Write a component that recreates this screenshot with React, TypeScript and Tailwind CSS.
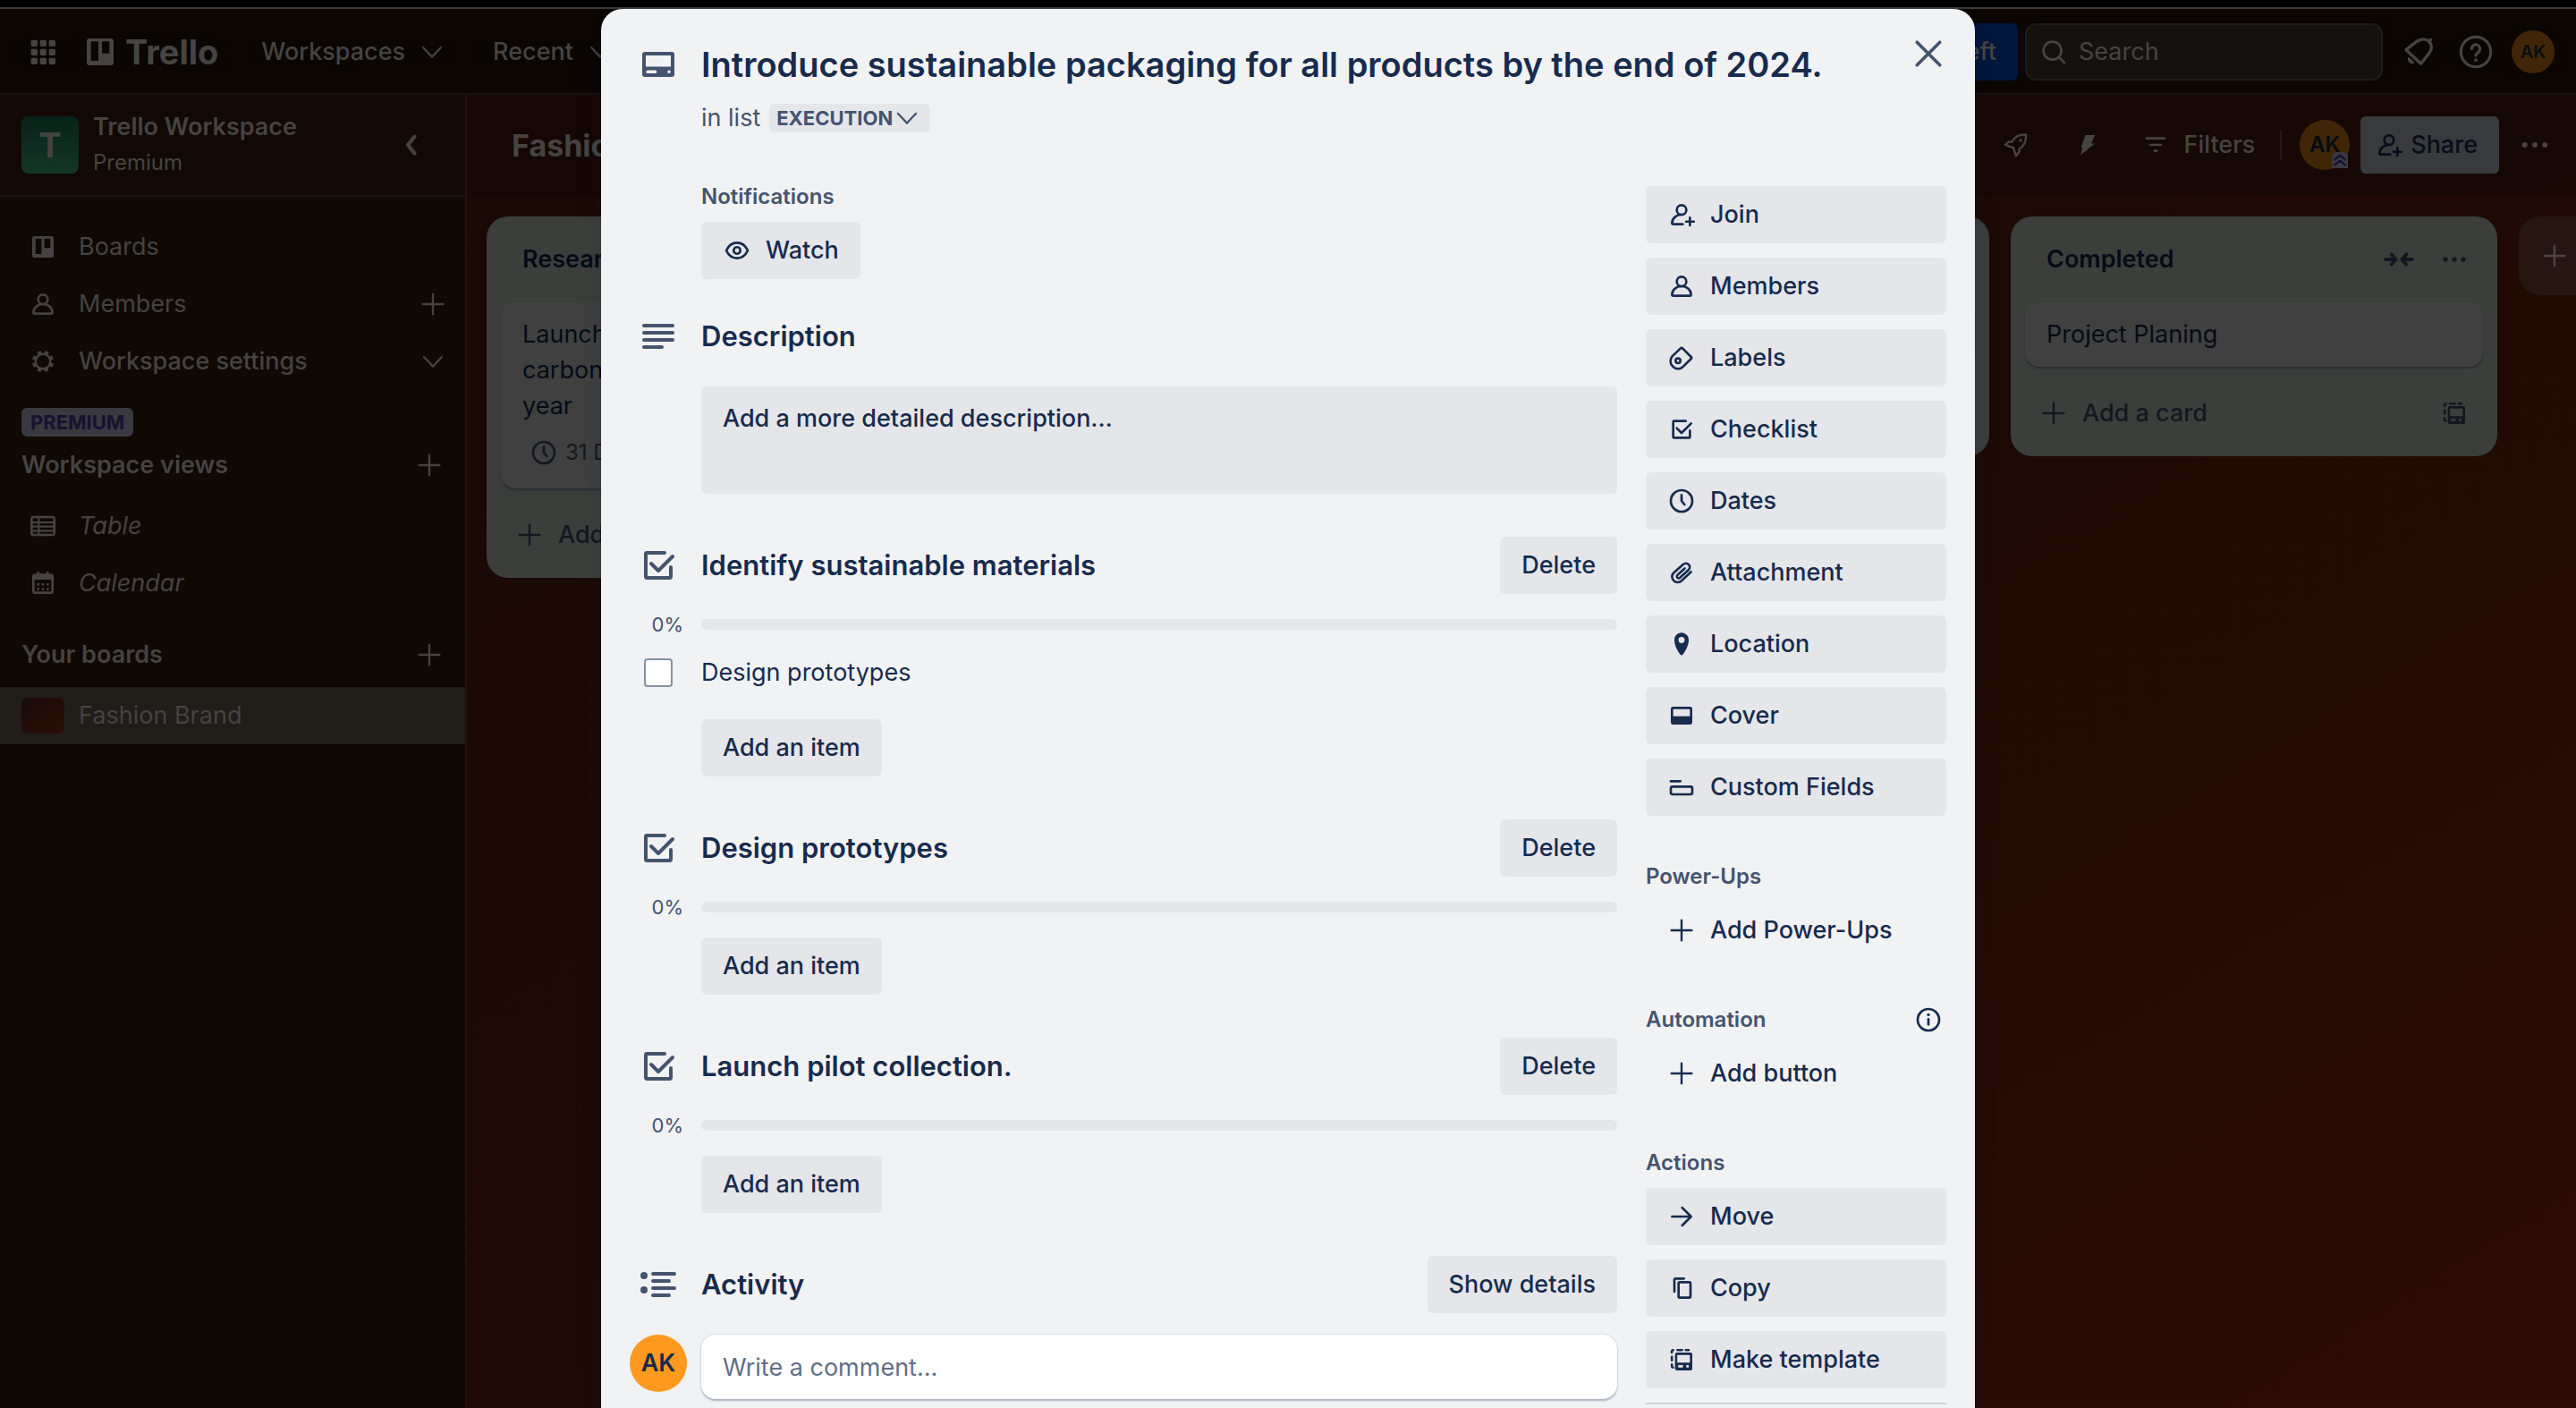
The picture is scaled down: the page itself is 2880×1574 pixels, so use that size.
import { useState, type ReactNode } from "react";

type IconProps = { className?: string };

/* Stroke icons share a 24-unit box; each draws one glyph of the interface. */
function Glyph({ className = "size-8", w = 2, children }: IconProps & { w?: number; children: ReactNode }) {
  return (
    <svg
      viewBox="0 0 24 24"
      className={`shrink-0 ${className}`}
      fill="none"
      stroke="currentColor"
      strokeWidth={w}
      strokeLinecap="round"
      strokeLinejoin="round"
      aria-hidden="true"
    >
      {children}
    </svg>
  );
}

const Plus = (p: IconProps) => (
  <Glyph {...p} w={1.8}>
    <path d="M12 3.5v17M3.5 12h17" />
  </Glyph>
);
const ChevronDown = (p: IconProps) => (
  <Glyph {...p} w={1.7}>
    <path d="M4.5 8.200l7.500 8 7.500-8" />
  </Glyph>
);
const AppGrid = (p: IconProps) => (
  <Glyph {...p}>
    <g fill="currentColor" stroke="none">
      {[4, 10, 16].map((y) => [4, 10, 16].map((x) => <rect key={`${x}-${y}`} x={x} y={y} width="4.400" height="4.400" rx="1" />))}
    </g>
  </Glyph>
);
const BoardMark = (p: IconProps) => (
  <Glyph {...p}>
    <path
      fill="currentColor"
      stroke="none"
      fillRule="evenodd"
      d="M5 3h14a2 2 0 0 1 2 2v14a2 2 0 0 1-2 2H5a2 2 0 0 1-2-2V5a2 2 0 0 1 2-2zm.8 2.600v11.800a.6.6 0 0 0 .6.6h3.800a.6.6 0 0 0 .6-.6V5.600a.6.6 0 0 0-.6-.6H6.400a.6.6 0 0 0-.6.6zm7.400 0v6.800a.6.6 0 0 0 .6.6h3.800a.6.6 0 0 0 .6-.6V5.600a.6.6 0 0 0-.6-.6h-3.800a.6.6 0 0 0-.6.6z"
    />
  </Glyph>
);
const Person = (p: IconProps) => (
  <Glyph {...p}>
    <circle cx="12" cy="8" r="4" />
    <path d="M4 19.200c0-4 3.500-7.200 8-7.200s8 3.200 8 7.200c0 .5-.4.800-.8.800H4.800c-.4 0-.8-.3-.8-.8z" />
  </Glyph>
);
const PersonAdd = (p: IconProps) => (
  <Glyph {...p}>
    <circle cx="12" cy="8" r="4" />
    <path d="M12 12c-4.500 0-8 3.200-8 7.200 0 .5.4.800.8.800H13M19 14.500v6.500M15.800 17.800h6.500" />
  </Glyph>
);
const Gear = (p: IconProps) => (
  <Glyph {...p} w={1.8}>
    <circle cx="12" cy="12" r="6.200" />
    <g strokeWidth="3.200" strokeLinecap="butt">
      {[0, 45, 90, 135, 180, 225, 270, 315].map((a) => (
        <path key={a} d="M12 5.800V3" transform={`rotate(${a + 22.5} 12 12)`} />
      ))}
    </g>
  </Glyph>
);
const TableIcon = (p: IconProps) => (
  <Glyph {...p}>
    <rect x="2.500" y="4.500" width="19" height="15" rx="1.500" />
    <path d="M3 9h18M3 12.500h18M3 16h18M8.500 4.500v15" strokeWidth="1.600" />
  </Glyph>
);
const CalendarIcon = (p: IconProps) => (
  <Glyph {...p}>
    <rect x="4" y="5" width="16" height="15" rx="1.500" />
    <path d="M4 7h16" strokeWidth="4" strokeLinecap="butt" />
    <path d="M8 3v3M16 3v3" />
    <path d="M8 13h.01M12 13h.01M16 13h.01M8 16.800h.01M12 16.800h.01M16 16.800h.01" strokeWidth="1.900" strokeLinecap="square" />
  </Glyph>
);
const Bell = (p: IconProps) => (
  <Glyph {...p} w={2}>
    <path d="M3.600 10.600 10.500 5.200c3-2.300 6.500-2.200 8.600-.2 1.900 1.900 1.900 4.800.2 7.600L13.600 20z" />
    <path d="M19.200 4.800l1-1" />
    <path d="M5.400 16.200c-.2 1.800.9 3.200 2.900 3.100z" fill="currentColor" strokeWidth="1.400" />
  </Glyph>
);
const Help = (p: IconProps) => (
  <Glyph {...p} w={1.9}>
    <circle cx="12" cy="12" r="10" />
    <path d="M9.200 10a2.800 2.800 0 1 1 4.600 2.100c-1 .8-1.800 1.200-1.800 2.400" />
    <path d="M12 17.500h.01" strokeWidth="2.300" />
  </Glyph>
);
const SearchIcon = (p: IconProps) => (
  <Glyph {...p}>
    <circle cx="11" cy="11" r="7.500" />
    <path d="M16.500 16.500l4.500 4.500" />
  </Glyph>
);
const Rocket = (p: IconProps) => (
  <Glyph {...p} w={1.8}>
    <path d="M8.500 9.500c2-3.800 6-6.500 11.800-6 .4 5.500-2 9.800-5.800 12l.3 2-2.800 3.700-1.500-4.200-.6-2.700-2.900-.8-4-1.800 2.800-2.200z" />
    <path d="M15.800 8.200h.01" strokeWidth="2.600" />
  </Glyph>
);
const Bolt = (p: IconProps) => (
  <Glyph {...p}>
    <path fill="currentColor" stroke="none" d="M10 3.800h8.200l-3.200 7h3L6.200 20.500l1.400-6.500h-1z" />
  </Glyph>
);
const FilterIcon = (p: IconProps) => (
  <Glyph {...p}>
    <path d="M4.500 6.500h15M7.500 12h9M11 17h2" />
  </Glyph>
);
const Dots = (p: IconProps) => (
  <Glyph {...p}>
    <g fill="currentColor" stroke="none">
      <circle cx="4.500" cy="12" r="2" />
      <circle cx="12" cy="12" r="2" />
      <circle cx="19.500" cy="12" r="2" />
    </g>
  </Glyph>
);
const Collapse = (p: IconProps) => (
  <Glyph {...p} w={2.7}>
    <path d="M2 12h7M6.500 8.300l3.200 3.700-3.200 3.700M22 12h-7M17.500 8.300L14.300 12l3.200 3.700" />
  </Glyph>
);
const TemplateIcon = (p: IconProps) => (
  <Glyph {...p}>
    <path d="M3.800 6V5.200c0-.8.500-1.200 1.200-1.200M8.500 3.900h4M15.500 3.900H18M3.900 9.500v3M3.900 16v1.500c0 .7.400 1 1 1" strokeWidth="1.900" />
    <path
      fill="currentColor"
      stroke="none"
      fillRule="evenodd"
      d="M8 6h11.500A1.500 1.500 0 0 1 21 7.500v12a1.500 1.500 0 0 1-1.500 1.500H8a1.500 1.500 0 0 1-1.500-1.500v-12A1.500 1.500 0 0 1 8 6zm.4 2v6.400H19V8zm.8 8.500v2h4v-2zm6.800 0v2h2v-2z"
    />
  </Glyph>
);
const Clock = (p: IconProps) => (
  <Glyph {...p}>
    <circle cx="12" cy="12" r="9" />
    <path d="M12 7v5l2.500 3" />
  </Glyph>
);
const CardIcon = (p: IconProps) => (
  <Glyph {...p}>
    <path
      fill="currentColor"
      stroke="none"
      fillRule="evenodd"
      d="M4.500 5h15A1.500 1.500 0 0 1 21 6.500v11a1.500 1.500 0 0 1-1.500 1.500h-15A1.500 1.500 0 0 1 3 17.500v-11A1.500 1.500 0 0 1 4.500 5zM5 7v6.200h14V7zm1 8.200a.8.8 0 0 0 0 1.800h4.300a.8.8 0 0 0 0-1.800zm12 0a.9.9 0 1 0 0 1.800.9.9 0 0 0 0-1.800z"
    />
  </Glyph>
);
const TextLines = (p: IconProps) => (
  <Glyph {...p}>
    <path d="M4 6h16M4 10h16M4 14h16M4 18h10" />
  </Glyph>
);
const CheckSquare = (p: IconProps) => (
  <Glyph {...p}>
    <path d="M15.500 5H5.700A.7.7 0 0 0 5 5.700v12.600a.7.7 0 0 0 .7.700h12.600a.7.7 0 0 0 .7-.7V13" />
    <path d="M8 11l4 4 8-8" />
  </Glyph>
);
const ActivityIcon = (p: IconProps) => (
  <Glyph {...p}>
    <circle cx="4" cy="7" r="2" fill="currentColor" stroke="none" />
    <circle cx="4" cy="15" r="2" fill="currentColor" stroke="none" />
    <path d="M9 6h12M9 10h9M9 14h12M9 18h9" />
  </Glyph>
);
const Eye = (p: IconProps) => (
  <Glyph {...p}>
    <path d="M3 12c2-4.300 5.300-6.500 9-6.500s7 2.200 9 6.500c-2 4.300-5.300 6.500-9 6.500S5 16.300 3 12z" />
    <circle cx="12" cy="12" r="2.800" />
  </Glyph>
);
const LabelIcon = (p: IconProps) => (
  <Glyph {...p}>
    <path d="M4.300 10.600 11 4.200c.6-.6 1.400-.6 2 0l7 7c.5.500.5 1.100 0 1.600l-6.500 6.400a5.900 5.900 0 0 1-8.800 0 6 6 0 0 1-.4-8.600z" />
    <circle cx="9" cy="14.500" r="2" />
  </Glyph>
);
const ClipIcon = (p: IconProps) => (
  <Glyph {...p}>
    <path d="M20 11.500l-7.800 7.300c-2 1.900-5 1.900-6.800 0-1.900-1.900-1.800-4.800.1-6.600l7.800-7c1.400-1.200 3.500-1.200 4.700.1 1.200 1.300 1.200 3.200-.1 4.500l-7.200 6.500c-.7.600-1.600.600-2.200 0-.6-.7-.6-1.600.1-2.200l6-5.500" />
  </Glyph>
);
const Pin = (p: IconProps) => (
  <Glyph {...p}>
    <path
      fill="currentColor"
      stroke="none"
      fillRule="evenodd"
      d="M12 2.500c3.500 0 6 2.700 6 6.200 0 3.800-2.300 9-5 12.100-.6.700-1.400.700-2 0-2.700-3.100-5-8.300-5-12.100 0-3.500 2.500-6.200 6-6.200zM12 6a2.600 2.600 0 1 0 0 5.200A2.600 2.600 0 0 0 12 6z"
    />
  </Glyph>
);
const CoverIcon = (p: IconProps) => (
  <Glyph {...p}>
    <rect x="4" y="5.500" width="16" height="13" rx="1" />
    <path d="M4 15.500h16" strokeWidth="6" strokeLinecap="butt" />
  </Glyph>
);
const FieldsIcon = (p: IconProps) => (
  <Glyph {...p}>
    <path d="M3 7h8" />
    <rect x="3" y="11.500" width="18" height="6.500" rx="1.500" />
  </Glyph>
);
const InfoIcon = (p: IconProps) => (
  <Glyph {...p}>
    <circle cx="12" cy="12" r="9" />
    <path d="M12 11.500v4.500" />
    <path d="M12 7.800h.01" strokeWidth="2.500" />
  </Glyph>
);
const ArrowRight = (p: IconProps) => (
  <Glyph {...p} w={1.9}>
    <path d="M4 12h16M12.500 4.500L20 12l-7.500 7.500" />
  </Glyph>
);
const CopyIcon = (p: IconProps) => (
  <Glyph {...p}>
    <rect x="9.500" y="7" width="10" height="13" rx="1" />
    <path d="M6 15V5a1 1 0 0 1 1-1h7" />
  </Glyph>
);
const CloseIcon = (p: IconProps) => (
  <Glyph {...p} w={2.4}>
    <path d="M3.500 3.500l17 17M20.500 3.500l-17 17" />
  </Glyph>
);

/* ---------- board behind the dialog ---------- */

function TopBar() {
  return (
    <header className="flex h-24 items-center border-b-2 border-[#171310] bg-[#0b0602] pl-7 pr-6 pt-0.5 text-[#454442]">
      <button aria-label="More apps" className="mr-6">
        <AppGrid className="size-10" />
      </button>
      <a href="#home" className="flex items-center gap-2 text-[38px] font-bold leading-none">
        <BoardMark className="size-10" />
        Trello
      </a>
      <button className="ml-12 flex items-center gap-3.5 text-[27px] font-medium">
        Workspaces <ChevronDown />
      </button>
      <button className="ml-13 flex items-center gap-3.5 text-[27px] font-medium">
        Recent <ChevronDown />
      </button>
      <button className="ml-auto h-16 rounded-md bg-[#03163b] px-6 text-[27px] font-medium">14 days left</button>
      <label className="ml-2 flex h-16 w-[400px] items-center gap-3 rounded-xl border-2 border-[#1f1b18] bg-[#15110e] pl-3.5">
        <SearchIcon />
        <input aria-label="Search" placeholder="Search" className="min-w-0 flex-1 bg-transparent text-[27px] outline-none placeholder:text-[#454442]" />
      </label>
      <button aria-label="Notifications" className="ml-5">
        <Bell className="size-10" />
      </button>
      <button aria-label="Information" className="ml-6">
        <Help className="size-10" />
      </button>
      <button aria-label="Account" className="ml-5 size-12 rounded-full bg-[#402607] text-[20px] font-semibold text-[#0a0c10]">
        AK
      </button>
    </header>
  );
}

function NavRow({ icon, label, trail, italic, medium }: { icon: ReactNode; label: string; trail?: ReactNode; italic?: boolean; medium?: boolean }) {
  return (
    <a href="#nav" className="flex h-16 items-center pl-8 pr-5">
      {icon}
      <span className={`ml-6 flex-1 text-[27px] ${italic ? "italic" : ""} ${medium ? "font-medium" : ""}`}>{label}</span>
      {trail}
    </a>
  );
}

function WorkspaceSidebar() {
  return (
    <aside className="w-[522px] shrink-0 border-r-2 border-[#21120d] bg-[#100803] text-[#454341]">
      <div className="flex h-[114px] items-center border-b-2 border-[#1c130e] bg-[#120904] pl-6 pr-8">
        <span className="flex size-16 items-center justify-center rounded-lg bg-linear-to-b from-[#082218] to-[#143626] text-[38px] font-bold">T</span>
        <div className="ml-4 flex-1">
          <p className="text-[27px] font-semibold leading-10">Trello Workspace</p>
          <p className="text-[24px] leading-10">Premium</p>
        </div>
        <button aria-label="Collapse sidebar" className="flex size-14 items-center justify-center">
          <Glyph w={3.6} className="size-7">
            <path d="M15 4l-6.500 8 6.500 8" />
          </Glyph>
        </button>
      </div>
      <nav className="pt-6">
        <NavRow icon={<BoardMark />} label="Boards" />
        <NavRow icon={<Person />} label="Members" trail={<Plus />} />
        <NavRow icon={<Gear />} label="Workspace settings" trail={<ChevronDown />} medium />
        <div className="flex px-6 pt-5">
          <span className="flex h-8 items-center rounded-md bg-[#3a3840] px-2.5 text-[22px] font-bold text-[#17122f]">PREMIUM</span>
        </div>
        <div className="mb-1 flex h-16 items-center justify-between px-6 text-[27px] font-semibold">
          Workspace views
          <button aria-label="Add view">
            <Plus />
          </button>
        </div>
        <NavRow icon={<TableIcon />} label="Table" italic />
        <NavRow icon={<CalendarIcon />} label="Calendar" italic />
        <div className="mt-4 flex h-16 items-center justify-between px-6 text-[27px] font-semibold">
          Your boards
          <button aria-label="Add board">
            <Plus />
          </button>
        </div>
        <a href="#board" className="mt-1 flex h-16 items-center gap-4 bg-[#211d19] pl-6 text-[27px]">
          <span className="h-10 w-12 rounded-md bg-linear-to-br from-[#180b07] to-[#2b0f08]" />
          Fashion Brand
        </a>
      </nav>
    </aside>
  );
}

function BoardHeader() {
  return (
    <div className="flex h-28 items-center bg-[#140704]/70 pl-[50px] pr-7 text-[#464341]">
      <h1 className="text-[34px] font-bold">Fashion Brand</h1>
      <button aria-label="Power-Ups" className="ml-auto">
        <Rocket />
      </button>
      <button aria-label="Automation" className="ml-12">
        <Bolt />
      </button>
      <button className="ml-11 flex items-center gap-4 text-[27px] font-medium">
        <FilterIcon />
        Filters
      </button>
      <span className="ml-7 mr-5 h-8 w-0.5 bg-[#261a17]" />
      <div className="relative">
        <span className="flex size-14 items-center justify-center rounded-full bg-[#402607] text-[24px] font-semibold text-[#060a12]">AK</span>
        <span className="absolute bottom-0.5 right-0.5 flex size-4.5 items-center justify-center rounded-t-md bg-[#3b3a40] text-[#17122f]">
          <Glyph w={3.6} className="size-4">
            <path d="M3 11l9-7 9 7M3 20l9-7 9 7" />
          </Glyph>
        </span>
      </div>
      <button className="ml-3 flex h-16 items-center gap-2 rounded-md bg-[#383a3d] pl-4 pr-6 text-[27px] font-medium text-[#060d1a]">
        <PersonAdd />
        Share
      </button>
      <button aria-label="Board menu" className="ml-5.5">
        <Dots className="size-9" />
      </button>
    </div>
  );
}

function List({ title, children }: { title: string; children: ReactNode }) {
  return (
    <section className="w-[544px] shrink-0 rounded-3xl bg-[#3c3e3c] p-4 text-[#13181f]">
      <div className="flex h-16 items-center gap-7 pl-6 pr-4">
        <h2 className="flex-1 text-[27px] font-semibold text-[#040b16]">{title}</h2>
        <button aria-label="Collapse list">
          <Collapse className="size-9" />
        </button>
        <button aria-label="List menu">
          <Dots />
        </button>
      </div>
      <div className="pt-4">{children}</div>
      <div className="mt-5 flex h-16 items-center pl-4 pr-4">
        <button className="flex flex-1 items-center gap-4 text-[27px] font-medium">
          <Plus />
          Add a card
        </button>
        <button aria-label="Create from template">
          <TemplateIcon />
        </button>
      </div>
    </section>
  );
}

function Card({ text, due }: { text: string; due?: string }) {
  return (
    <article className="rounded-2xl bg-[#404040] px-6 py-4 text-[27px] leading-10 text-[#040b16] shadow-[0_2px_2px_#2c2d32]">
      <p>{text}</p>
      {due && (
        <p className="mb-2 flex h-12 items-center gap-2 pl-2 pt-4 text-[24px] text-[#13181f]">
          <Clock />
          {due}
        </p>
      )}
    </article>
  );
}

function Board() {
  return (
    <main className="min-w-0 flex-1 bg-linear-to-br from-[#180904] via-[#1d0a04] to-[#2e0b08]">
      <BoardHeader />
      <div className="flex items-start gap-6 overflow-hidden pl-[22px] pt-6">
        <List title="Research">
          <Card text="Launch a campaign to promote our carbon neutral collection by next year" due="31 Dec" />
        </List>
        <List title="Planning">
          <Card text="Market review" />
        </List>
        <List title="Execution">
          <Card text="Packaging" />
        </List>
        <List title="Completed">
          <Card text="Project Planing" />
        </List>
        <button aria-label="Add another list" className="flex h-[88px] w-[544px] shrink-0 items-center rounded-3xl bg-[#261612] pl-6 text-[#4a4442]">
          <Plus />
        </button>
      </div>
    </main>
  );
}

/* ---------- card dialog ---------- */

const grayButton = "flex h-16 shrink-0 items-center rounded-md bg-[#e4e6ea] px-6 text-[27px] font-medium text-[#172b4d]";

/* One dialog row: an icon in the gutter, content beside it. */
function Row({ icon, className = "", children }: { icon?: ReactNode; className?: string; children: ReactNode }) {
  return (
    <div className={`flex items-center ${className}`}>
      <div className="flex w-20 shrink-0 items-center justify-center pr-4 text-[#44546f]">{icon}</div>
      <div className="flex min-w-0 flex-1 items-center justify-between">{children}</div>
    </div>
  );
}

function Checklist({ title, items }: { title: string; items: string[] }) {
  const [done, setDone] = useState<string[]>([]);
  const percent = items.length ? Math.round((done.length / items.length) * 100) : 0;
  return (
    <section className="pt-12">
      <Row icon={<CheckSquare className="size-12" />} className="h-16">
        <h3 className="text-[31px] font-semibold">{title}</h3>
        <button className={grayButton}>Delete</button>
      </Row>
      <div className="flex h-[68px] items-center">
        <span className="w-20 shrink-0 pr-5 text-right text-[22px] text-[#44546f]">{percent}%</span>
        <div className="h-3 flex-1 overflow-hidden rounded-full bg-[#e4e6ea]">
          <div className="h-full bg-[#579dff]" style={{ width: `${percent}%` }} />
        </div>
      </div>
      {items.map((item) => (
        <label key={item} className="mb-4 flex h-10 items-center text-[27px] font-normal">
          <span className="flex w-20 shrink-0 justify-center pr-4">
            <input
              type="checkbox"
              checked={done.includes(item)}
              onChange={() => setDone(done.includes(item) ? done.filter((d) => d !== item) : [...done, item])}
              className="size-8 appearance-none rounded-sm border-2 border-[#8590a2] bg-white checked:bg-[#0c66e4]"
            />
          </span>
          {item}
        </label>
      ))}
      <div className={items.length ? "pl-20 pt-4" : "pl-20"}>
        <button className={grayButton}>Add an item</button>
      </div>
    </section>
  );
}

function SideLabel({ children }: { children: ReactNode }) {
  return <h4 className="mb-2 text-[24px] font-semibold leading-10 text-[#44546f]">{children}</h4>;
}

function SideButton({ icon, label, plain }: { icon: ReactNode; label: string; plain?: boolean }) {
  return (
    <button className={`flex h-16 w-full items-center gap-4 rounded-md px-6 text-[27px] font-medium ${plain ? "" : "bg-[#e4e6ea]"}`}>
      {icon}
      {label}
    </button>
  );
}

const cardActions: { label: string; icon: ReactNode }[] = [
  { label: "Join", icon: <PersonAdd /> },
  { label: "Members", icon: <Person /> },
  { label: "Labels", icon: <LabelIcon /> },
  { label: "Checklist", icon: <CheckSquare /> },
  { label: "Dates", icon: <Clock /> },
  { label: "Attachment", icon: <ClipIcon /> },
  { label: "Location", icon: <Pin /> },
  { label: "Cover", icon: <CoverIcon /> },
  { label: "Custom Fields", icon: <FieldsIcon /> },
];

function CardDialog() {
  return (
    <div role="dialog" aria-label="Card details" className="mt-2.5 w-full max-w-[1536px] rounded-3xl bg-[#f1f2f4] px-8 pb-8 text-[#172b4d] shadow-[0_16px_24px_rgba(9,30,66,0.15)]">
      <div className="flex items-start justify-between pt-4.5">
        <div className="flex-1">
          <Row icon={<CardIcon className="size-12" />} className="h-[88px]">
            <h2 className="text-[38px] font-semibold">Introduce sustainable packaging for all products by the end of 2024.</h2>
          </Row>
          <div className="flex h-8 items-center gap-2.5 pl-20 text-[27px] leading-8 text-[#44546f]">
            <span className="whitespace-nowrap">in list</span>
            <button className="flex h-8 items-center rounded-md bg-[#e4e6ea] pl-2 pr-2.5 text-[22px] font-bold">
              EXECUTION <ChevronDown />
            </button>
          </div>
        </div>
        <button aria-label="Close dialog" className="mr-0.5 mt-3.5 text-[#44546f]">
          <CloseIcon className="size-9" />
        </button>
      </div>

      <div className="flex gap-8 pt-13">
        <div className="min-w-0 flex-1">
          <div className="pl-20">
            <SideLabel>Notifications</SideLabel>
            <button className={`${grayButton} gap-4`}>
              <Eye />
              Watch
            </button>
          </div>

          <section className="pt-8">
            <Row icon={<TextLines className="size-12" />} className="h-16">
              <h3 className="text-[31px] font-semibold">Description</h3>
            </Row>
            <div className="pl-20 pt-6">
              <button className="flex h-[120px] w-full items-start rounded-md bg-[#e4e6ea] px-6 py-4 text-left text-[27px] font-medium leading-10">
                Add a more detailed description…
              </button>
            </div>
          </section>

          <Checklist title="Identify sustainable materials" items={["Design prototypes"]} />
          <Checklist title="Design prototypes" items={[]} />
          <Checklist title="Launch pilot collection." items={[]} />

          <section className="pt-12">
            <Row icon={<ActivityIcon className="size-12" />} className="h-16">
              <h3 className="text-[31px] font-semibold">Activity</h3>
              <button className={grayButton}>Show details</button>
            </Row>
            <div className="flex items-start gap-4 pt-6">
              <span className="flex size-16 shrink-0 items-center justify-center rounded-full bg-[#ff991f] text-[27px] font-semibold">AK</span>
              <input
                aria-label="Write a comment"
                placeholder="Write a comment…"
                className="h-[72px] min-w-0 flex-1 rounded-2xl bg-white px-6 text-[27px] shadow-[0_2px_2px_#aab1c0,0_0_2px_#b9bfcb] outline-none placeholder:text-[#626f86]"
              />
            </div>
          </section>
        </div>

        <aside className="w-[336px] shrink-0 pt-2">
          <div className="flex flex-col gap-4">
            {cardActions.map((a) => (
              <SideButton key={a.label} {...a} />
            ))}
          </div>
          <div className="pt-12">
            <SideLabel>Power-Ups</SideLabel>
            <SideButton plain icon={<Plus />} label="Add Power-Ups" />
          </div>
          <div className="pt-12">
            <div className="flex items-start justify-between pr-1">
              <SideLabel>Automation</SideLabel>
              <button aria-label="About automation" className="flex h-10 items-center">
                <InfoIcon />
              </button>
            </div>
            <SideButton plain icon={<Plus />} label="Add button" />
          </div>
          <div className="pt-12">
            <SideLabel>Actions</SideLabel>
            <div className="flex flex-col gap-4">
              <SideButton icon={<ArrowRight />} label="Move" />
              <SideButton icon={<CopyIcon />} label="Copy" />
              <SideButton icon={<TemplateIcon />} label="Make template" />
              <hr className="border-t-2 border-[#cdd1d8]" />
            </div>
          </div>
        </aside>
      </div>
    </div>
  );
}

export default function App() {
  return (
    <div className="relative flex h-screen flex-col overflow-hidden bg-[#180904] font-[Inter,'Liberation_Sans',sans-serif]">
      <div className="h-2.5 shrink-0 border-b-2 border-[#3a3a3a] bg-black" />
      <TopBar />
      <div className="flex min-h-0 flex-1">
        <WorkspaceSidebar />
        <Board />
      </div>
      <div className="absolute inset-0 flex items-start justify-center overflow-hidden">
        <CardDialog />
      </div>
    </div>
  );
}
